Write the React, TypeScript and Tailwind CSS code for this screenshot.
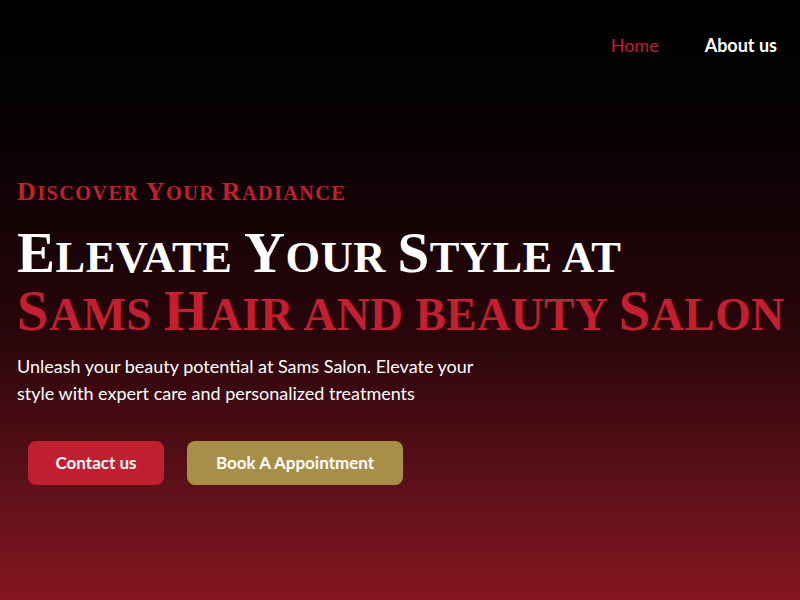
import { Fragment } from 'react'

// render lowercase runs as smaller uppercase, like the reference's small caps
function SmallCaps({ text, scale }: { text: string; scale: string }) {
  const parts = text.match(/[A-Z]+|[^A-Z]+/g) ?? []
  return (
    <>
      {parts.map((p, i) =>
        /[A-Z]/.test(p[0]) ? (
          <Fragment key={i}>{p}</Fragment>
        ) : (
          <span key={i} className={`uppercase ${scale}`}>
            {p}
          </span>
        ),
      )}
    </>
  )
}

export default function App() {
  return (
    <div className="relative h-[600px] w-[800px] overflow-hidden bg-[linear-gradient(to_bottom,#000000_0%,#050102_20%,#2a060b_57%,#61111a_83%,#85151f_100%)] font-['Lato',sans-serif]">
      <nav className="flex justify-end gap-[46px] pr-[23px] pt-[32px] text-[18px]">
        <a className="text-[#c41e2f]">Home</a>
        <a className="font-bold text-white">About us</a>
      </nav>

      <section className="pl-[17px] pt-[120px]">
        <p className="font-['Liberation_Serif',serif] text-[26px] font-bold leading-none tracking-[1.4px] text-[#c41e2f]">
          <SmallCaps text="Discover Your Radiance" scale="text-[0.78em]" />
        </p>
        <h1 className="mt-[21px] font-['Liberation_Serif',serif] text-[57px] font-bold leading-[54px] tracking-[0.5px]">
          <span className="block text-white">
            <SmallCaps text="Elevate Your Style at" scale="text-[0.78em]" />
          </span>
          <span className="block text-[#c41e2f]">
            <SmallCaps text="Sams Hair and beauty Salon" scale="text-[0.8em]" />
          </span>
        </h1>
        <p className="mt-[11px] w-[470px] text-[18px] leading-[27px] text-white">
          Unleash your beauty potential at Sams Salon. Elevate your style with expert care and personalized treatments
        </p>
        <div className="mt-[34px] flex gap-[23px] pl-[11px]">
          <button className="h-[44px] w-[136px] rounded-[8px] bg-[#c01f30] text-[17px] font-bold text-white">
            Contact us
          </button>
          <button className="h-[44px] w-[216px] rounded-[8px] bg-[#a88f48] text-[17px] font-bold text-white">
            Book A Appointment
          </button>
        </div>
      </section>
    </div>
  )
}
